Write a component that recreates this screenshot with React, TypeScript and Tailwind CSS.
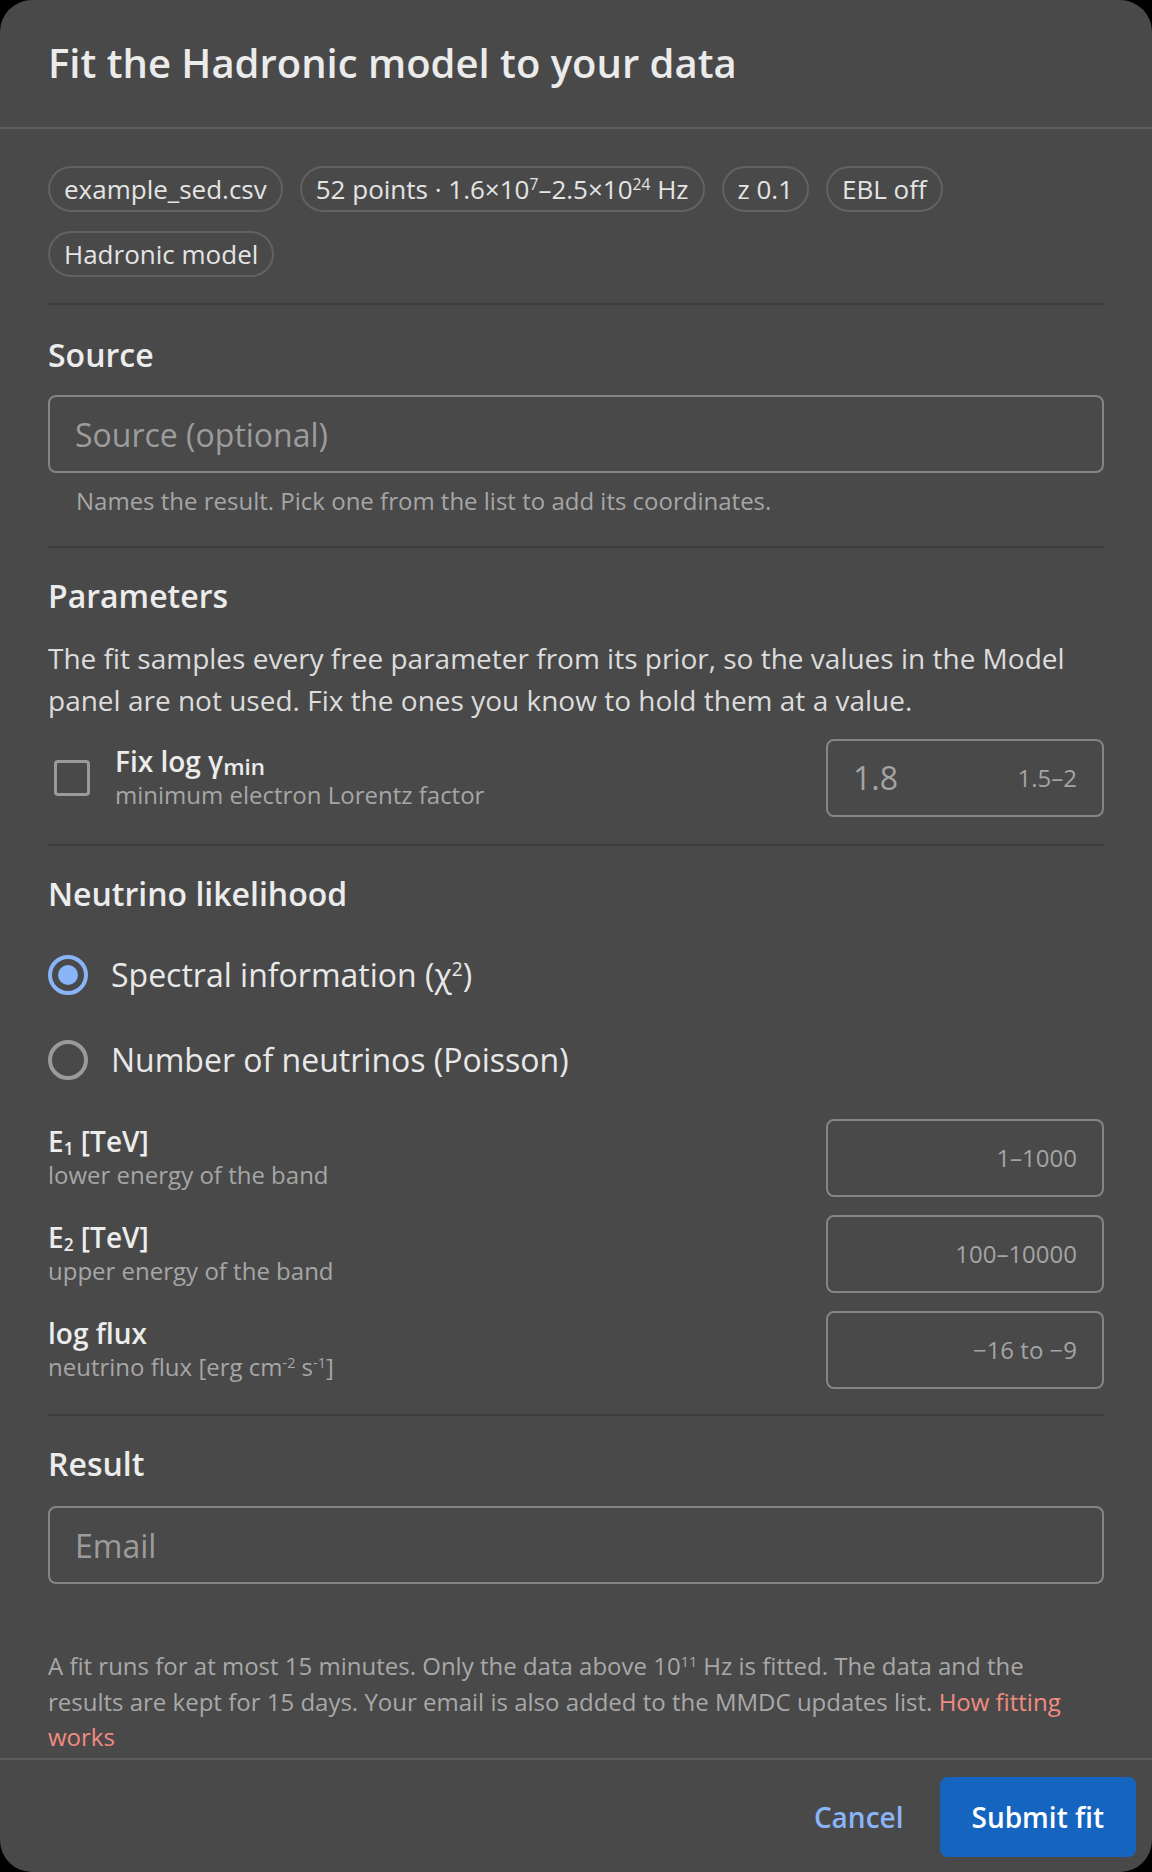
import type { ReactNode } from "react";

const font = { fontFamily: '"Open Sans", "Noto Sans", sans-serif' };

function Sup({ children }: { children: ReactNode }) {
  return <sup className="top-[-0.55em] text-[60%]">{children}</sup>;
}

function Sub({ children, className }: { children: ReactNode; className?: string }) {
  return <sub className={className ?? "bottom-[-0.2em] text-[62%]"}>{children}</sub>;
}

const chips: ReactNode[] = [
  "example_sed.csv",
  <>
    52 points · 1.6×10<Sup>7</Sup>–2.5×10<Sup>24</Sup>{" "}Hz
  </>,
  "z 0.1",
  "EBL off",
  "Hadronic model",
];

type RangeRow = { label: ReactNode; hint: ReactNode; range: string };

const neutrinoRows: RangeRow[] = [
  {
    label: (
      <>
        E<Sub>1</Sub> [TeV]
      </>
    ),
    hint: "lower energy of the band",
    range: "1–1000",
  },
  {
    label: (
      <>
        E<Sub>2</Sub> [TeV]
      </>
    ),
    hint: "upper energy of the band",
    range: "100–10000",
  },
  {
    label: "log flux",
    hint: (
      <>
        neutrino flux [erg cm<Sup>-2</Sup> s<Sup>-1</Sup>]
      </>
    ),
    range: "−16 to −9",
  },
];

function Divider() {
  return <div className="h-[2px] bg-[#3d3d3d]" />;
}

function Heading({ children, className }: { children: ReactNode; className?: string }) {
  return (
    <h3 className={`text-[32px] leading-[40px] font-semibold text-[#ececec] ${className ?? ""}`}>
      {children}
    </h3>
  );
}

function Radio({ checked, label }: { checked?: boolean; label: ReactNode }) {
  return (
    <label className="flex h-[64px] items-center gap-[23px]">
      <span
        className={`flex size-[40px] items-center justify-center rounded-full border-[4px] ${
          checked ? "border-[#8ab4f8]" : "border-[#9a9a9a]"
        }`}
      >
        {checked && <span className="size-[20px] rounded-full bg-[#8ab4f8]" />}
      </span>
      <span className="text-[32px] leading-[40px] text-[#e8e8e8]">{label}</span>
    </label>
  );
}

export default function App() {
  return (
    <div className="min-h-screen bg-black" style={font}>
      <div className="flex h-[1872px] flex-col overflow-hidden rounded-[32px] bg-[#494949]">
        <header className="flex h-[129px] shrink-0 items-center border-b-2 border-[#5c5c5c] px-[48px] pb-[2px]">
          <h2 className="text-[40px] font-semibold text-[#ebebeb]">
            Fit the Hadronic model to your data
          </h2>
        </header>

        <div className="flex-1 overflow-hidden px-[48px] pt-[37px]">
          <div className="flex flex-wrap gap-x-[17px] gap-y-[19px]">
            {chips.map((chip, i) => (
              <span
                key={i}
                className="flex h-[46px] items-center rounded-full border-2 border-[#626262] px-[14px] text-[26px] leading-[32px] text-[#e4e4e4]"
              >
                <span>{chip}</span>
              </span>
            ))}
          </div>

          <div className="mt-[26px]">
            <Divider />
          </div>

          <Heading className="mt-[30px]">Source</Heading>
          <input
            placeholder="Source (optional)"
            className="mt-[20px] h-[78px] w-full rounded-[8px] border-2 border-[#858585] bg-transparent px-[25px] text-[32px] text-[#e8e8e8] outline-none placeholder:text-[#9c9c9c]"
          />
          <p className="mt-[12px] pl-[28px] text-[24px] leading-[32px] text-[#a6a6a6]">
            Names the result. Pick one from the list to add its coordinates.
          </p>

          <div className="mt-[29px]">
            <Divider />
          </div>

          <Heading className="mt-[28px]">Parameters</Heading>
          <p className="mt-[21px] text-[28px] leading-[42px] text-[#dcdcdc]">
            The fit samples every free parameter from its prior, so the values in the Model
            panel are not used. Fix the ones you know to hold them at a value.
          </p>

          <div className="mt-[18px] flex h-[78px] items-center justify-between">
            <div className="flex items-center gap-[25px] pl-[6px]">
              <span className="size-[36px] rounded-[4px] border-[3px] border-[#9a9a9a]" />
              <div>
                <div className="text-[28px] leading-[32px] font-semibold text-[#ececec]">
                  Fix log γ<Sub className="bottom-[-0.15em] text-[80%]">min</Sub>
                </div>
                <div className="mt-[2px] text-[24px] leading-[32px] text-[#a6a6a6]">
                  minimum electron Lorentz factor
                </div>
              </div>
            </div>
            <div className="flex h-[78px] w-[278px] items-center justify-between rounded-[8px] border-2 border-[#858585] pl-[25px] pr-[25px]">
              <span className="text-[32px] text-[#a4a4a4]">1.8</span>
              <span className="text-[24px] text-[#a4a4a4]">1.5–2</span>
            </div>
          </div>

          <div className="mt-[27px]">
            <Divider />
          </div>

          <Heading className="mt-[28px]">Neutrino likelihood</Heading>
          <div className="mt-[29px] flex flex-col gap-[21px]">
            <Radio
              checked
              label={
                <>
                  Spectral information (χ<Sup>2</Sup>)
                </>
              }
            />
            <Radio label="Number of neutrinos (Poisson)" />
          </div>

          <div className="mt-[27px] flex flex-col gap-[18px]">
            {neutrinoRows.map((row) => (
              <div key={row.range} className="flex h-[78px] items-center justify-between">
                <div>
                  <div className="text-[28px] leading-[32px] font-semibold text-[#ececec]">
                    {row.label}
                  </div>
                  <div className="mt-[2px] text-[24px] leading-[32px] text-[#a6a6a6]">
                    {row.hint}
                  </div>
                </div>
                <div className="flex h-[78px] w-[278px] items-center justify-end rounded-[8px] border-2 border-[#858585] px-[25px]">
                  <span className="text-[24px] text-[#a4a4a4]">{row.range}</span>
                </div>
              </div>
            ))}
          </div>

          <div className="mt-[25px]">
            <Divider />
          </div>

          <Heading className="mt-[28px]">Result</Heading>
          <input
            type="email"
            placeholder="Email"
            className="mt-[22px] h-[78px] w-full rounded-[8px] border-2 border-[#858585] bg-transparent px-[25px] text-[32px] text-[#e8e8e8] outline-none placeholder:text-[#9c9c9c]"
          />

          <p className="mt-[64px] text-[24px] leading-[35.5px] text-[#a8a8a8]">
            A fit runs for at most 15 minutes. Only the data above 10<Sup>11</Sup> Hz is fitted.
            The data and the results are kept for 15 days. Your email is also added to the MMDC
            updates list.{" "}
            <a href="#" className="text-[#f28b82]">
              How fitting works
            </a>
          </p>
        </div>

        <footer className="flex h-[114px] shrink-0 items-center justify-end gap-[36px] border-t-2 border-[#5c5c5c] pr-[16px] pt-[1px]">
          <button className="text-[28px] font-semibold text-[#8ab4f8]">Cancel</button>
          <button className="h-[80px] rounded-[8px] bg-[#1565c0] px-[32px] text-[28px] font-semibold text-white">
            Submit fit
          </button>
        </footer>
      </div>
    </div>
  );
}
